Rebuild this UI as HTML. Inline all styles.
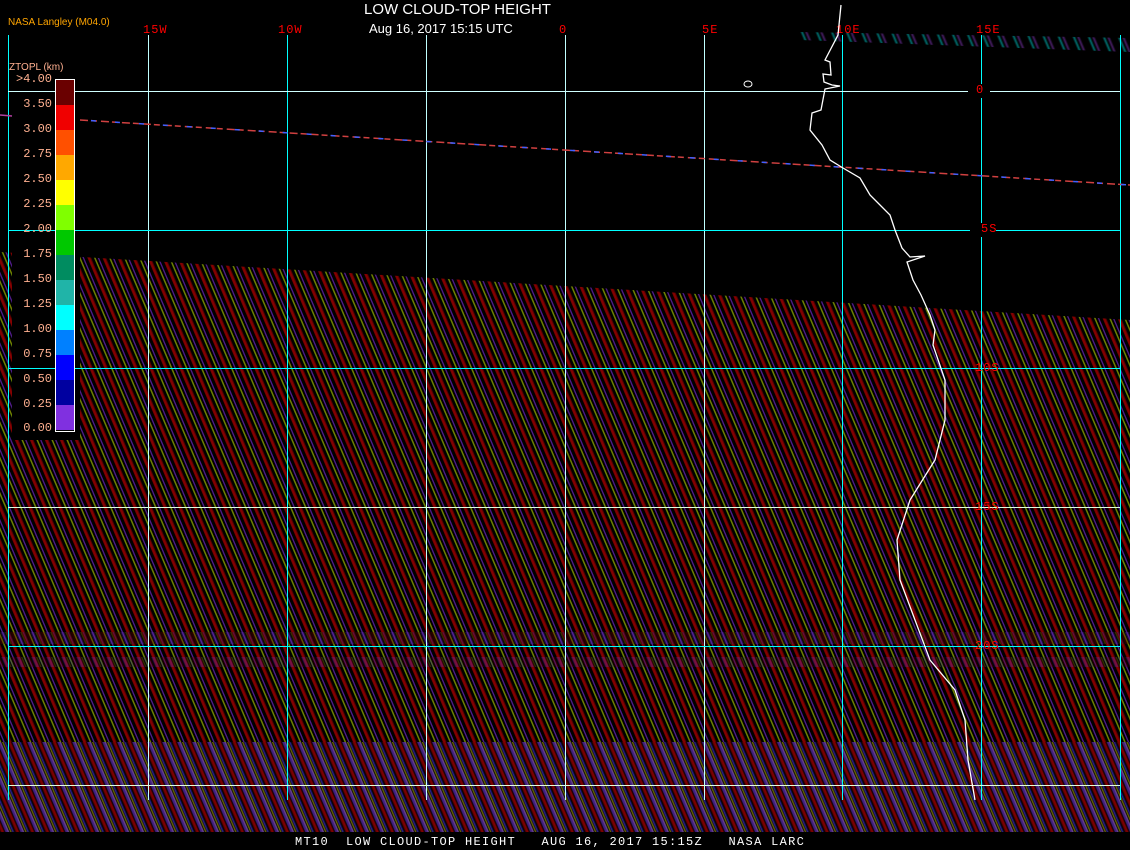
<!DOCTYPE html>
<html><head><meta charset="utf-8"><style>
html,body{margin:0;padding:0;background:#000;}
#w{position:relative;width:1130px;height:850px;overflow:hidden;background:#000;font-family:"Liberation Mono","DejaVu Sans Mono",monospace;}
.sw{position:absolute;left:0;top:0;width:1130px;height:832px;opacity:.8;
background:repeating-linear-gradient(67deg,#000 0px,#000 1px,#900000 1.5px,#b00000 3px,#500000 4.5px,#000 5px,#000 7px,#70a000 7.5px,#a0a000 8.5px,#000 9px,#000 10.5px,#6020a8 10.8px,#6020a8 11.8px,#000 12.2px,#000 13.8px);}
.lw{position:absolute;left:0;width:1130px;
background:repeating-linear-gradient(67deg,#000 0px,#600000 1px,#800000 3px,#000 4.5px,#5028a0 5.5px,#6a30c0 8px,#000 9px,#a0a000 10px,#000 11.3px,#3030c0 12px,#000 13.8px);opacity:.75}
.g{position:absolute;background:#00ffff;}
.lab{position:absolute;color:#ff0000;font-size:12px;letter-spacing:1px;}
.leg{position:absolute;left:56px;width:18px;}
.lt{position:absolute;left:8px;width:44px;text-align:right;color:#ffb090;font-size:12px;}
</style></head><body><div id="w">
<div class="sw" style="clip-path:polygon(0 252px,1130px 320px,1130px 832px,0 832px);"></div>
<div style="position:absolute;left:12px;top:240px;width:68px;height:200px;background:#000"></div>
<div class="lw" style="top:632px;height:12px;opacity:.35"></div>
<div class="lw" style="top:657px;height:10px;opacity:.35"></div>
<div class="lw" style="top:742px;height:90px;"></div>
<div class="sw" style="clip-path:polygon(800px 32px,1130px 38px,1130px 52px,800px 40px);opacity:.6;background:repeating-linear-gradient(67deg,#000 0,#00b0b0 2px,#000 4px,#7030a0 6px,#000 8px,#000 13.8px)"></div>
<!-- grid -->
<div class="g" style="left:8px;top:35px;width:1px;height:765px"></div>
<div class="g" style="left:148px;top:35px;width:1px;height:765px;background:#c0ffff"></div>
<div class="g" style="left:287px;top:35px;width:1px;height:765px"></div>
<div class="g" style="left:426px;top:35px;width:1px;height:765px;background:#c0ffff"></div>
<div class="g" style="left:565px;top:35px;width:1px;height:765px;background:#c0ffff"></div>
<div class="g" style="left:704px;top:35px;width:1px;height:765px;background:#c0ffff"></div>
<div class="g" style="left:842px;top:35px;width:1px;height:765px"></div>
<div class="g" style="left:981px;top:35px;width:1px;height:765px"></div>
<div class="g" style="left:1120px;top:35px;width:1px;height:765px"></div>
<div class="g" style="left:8px;top:91px;width:1112px;height:1px;background:#d0ffff"></div>
<div class="g" style="left:8px;top:230px;width:1112px;height:1px"></div>
<div class="g" style="left:8px;top:368px;width:1112px;height:1px"></div>
<div class="g" style="left:8px;top:507px;width:1112px;height:1px;background:#e0ffe0"></div>
<div class="g" style="left:8px;top:646px;width:1112px;height:1px"></div>
<div class="g" style="left:8px;top:785px;width:1112px;height:1px;background:#e0ffe0"></div>
<div style="position:absolute;left:968px;top:84px;width:22px;height:14px;background:#000"></div>
<div style="position:absolute;left:970px;top:223px;width:26px;height:14px;background:#000"></div>
<div class="lab" style="left:143px;top:23px">15W</div>
<div class="lab" style="left:278px;top:23px">10W</div>
<div class="lab" style="left:559px;top:23px">0</div>
<div class="lab" style="left:702px;top:23px">5E</div>
<div class="lab" style="left:836px;top:23px">10E</div>
<div class="lab" style="left:976px;top:23px">15E</div>
<div class="lab" style="left:976px;top:83px">0</div>
<div class="lab" style="left:981px;top:222px">5S</div>
<div class="lab" style="left:975px;top:361px">10S</div>
<div class="lab" style="left:975px;top:500px">15S</div>
<div class="lab" style="left:975px;top:639px">20S</div>
<svg style="position:absolute;left:0;top:0" width="1130" height="850">
<line x1="80" y1="120" x2="1130" y2="185" stroke="#d04040" stroke-width="1.5" stroke-dasharray="8 3 6 4" />
<line x1="80" y1="120" x2="1130" y2="185" stroke="#4060ff" stroke-width="1.5" stroke-dasharray="0 11 5 8" />
<line x1="0" y1="115" x2="12" y2="116" stroke="#b040a0" stroke-width="1.5"/>
<polyline fill="none" stroke="#fff" stroke-width="1.3" points="841,5 838,35 825,60 830,62 831,75 823,74 824,82 832,85 840,86 825,89 821,110 812,113 810,130 822,145 830,160 843,168 860,178 870,195 880,205 890,215 895,230 902,248 910,257 925,256 907,262 913,280 921,295 930,315 935,330 933,345 945,380 945,420 935,460 910,500 897,540 900,580 915,620 930,660 955,690 965,720 968,760 975,800"/>
<ellipse cx="748" cy="84" rx="4" ry="3" fill="none" stroke="#fff" stroke-width="1"/>
</svg>
<div style="position:absolute;left:8px;top:17px;color:#ffa500;font-family:'Liberation Sans',sans-serif;font-size:10px">NASA Langley (M04.0)</div>
<div style="position:absolute;left:364px;top:1px;color:#fff;font-family:'Liberation Sans',sans-serif;font-size:15px">LOW CLOUD-TOP HEIGHT</div>
<div style="position:absolute;left:369px;top:21px;color:#fff;font-family:'Liberation Sans',sans-serif;font-size:13px">Aug 16, 2017 15:15 UTC</div>
<div style="position:absolute;left:9px;top:62px;color:#ffb090;font-size:10px;font-family:'Liberation Sans',sans-serif">ZTOPL (km)</div>
<div style="position:absolute;left:55px;top:79px;width:20px;height:353px;border:1px solid #fff;box-sizing:border-box"></div>
<div class="leg" style="top:80px;height:25px;background:#6a0000"></div>
<div class="leg" style="top:105px;height:25px;background:#f00000"></div>
<div class="leg" style="top:130px;height:25px;background:#ff5000"></div>
<div class="leg" style="top:155px;height:25px;background:#ffa800"></div>
<div class="leg" style="top:180px;height:25px;background:#ffff00"></div>
<div class="leg" style="top:205px;height:25px;background:#80ff00"></div>
<div class="leg" style="top:230px;height:25px;background:#00c800"></div>
<div class="leg" style="top:255px;height:25px;background:#008c60"></div>
<div class="leg" style="top:280px;height:25px;background:#20b4a8"></div>
<div class="leg" style="top:305px;height:25px;background:#00ffff"></div>
<div class="leg" style="top:330px;height:25px;background:#0080ff"></div>
<div class="leg" style="top:355px;height:25px;background:#0000ff"></div>
<div class="leg" style="top:380px;height:25px;background:#0000a0"></div>
<div class="leg" style="top:405px;height:25px;background:#8030e0"></div>
<div class="lt" style="top:72px">&gt;4.00</div>
<div class="lt" style="top:97px">3.50</div>
<div class="lt" style="top:122px">3.00</div>
<div class="lt" style="top:147px">2.75</div>
<div class="lt" style="top:172px">2.50</div>
<div class="lt" style="top:197px">2.25</div>
<div class="lt" style="top:222px">2.00</div>
<div class="lt" style="top:247px">1.75</div>
<div class="lt" style="top:272px">1.50</div>
<div class="lt" style="top:297px">1.25</div>
<div class="lt" style="top:322px">1.00</div>
<div class="lt" style="top:347px">0.75</div>
<div class="lt" style="top:372px">0.50</div>
<div class="lt" style="top:397px">0.25</div>
<div class="lt" style="top:421px">0.00</div>
<div style="position:absolute;left:0;top:833px;width:1130px;height:17px;background:#000"></div>
<div style="position:absolute;left:295px;top:835px;color:#fff;font-size:12px;letter-spacing:1.3px;white-space:pre">MT10  LOW CLOUD-TOP HEIGHT   AUG 16, 2017 15:15Z   NASA LARC</div>
</div></body></html>
